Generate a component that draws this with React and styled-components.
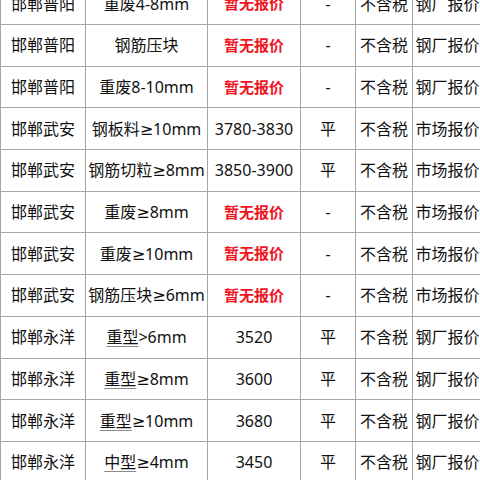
import React from 'react';
import styled, { createGlobalStyle } from 'styled-components';

const rows = [
  { area: '邯郸普阳', spec: '重废4-8mm', price: null, change: '-', tax: '不含税', source: '钢厂报价' },
  { area: '邯郸普阳', spec: '钢筋压块', price: null, change: '-', tax: '不含税', source: '钢厂报价' },
  { area: '邯郸普阳', spec: '重废8-10mm', price: null, change: '-', tax: '不含税', source: '钢厂报价' },
  { area: '邯郸武安', spec: '钢板料≥10mm', price: '3780-3830', change: '平', tax: '不含税', source: '市场报价' },
  { area: '邯郸武安', spec: '钢筋切粒≥8mm', price: '3850-3900', change: '平', tax: '不含税', source: '市场报价' },
  { area: '邯郸武安', spec: '重废≥8mm', price: null, change: '-', tax: '不含税', source: '市场报价' },
  { area: '邯郸武安', spec: '重废≥10mm', price: null, change: '-', tax: '不含税', source: '市场报价' },
  { area: '邯郸武安', spec: '钢筋压块≥6mm', price: null, change: '-', tax: '不含税', source: '市场报价' },
  { area: '邯郸永洋', type: '重型', spec: '>6mm', price: '3520', change: '平', tax: '不含税', source: '钢厂报价' },
  { area: '邯郸永洋', type: '重型', spec: '≥8mm', price: '3600', change: '平', tax: '不含税', source: '钢厂报价' },
  { area: '邯郸永洋', type: '重型', spec: '≥10mm', price: '3680', change: '平', tax: '不含税', source: '钢厂报价' },
  { area: '邯郸永洋', type: '中型', spec: '≥4mm', price: '3450', change: '平', tax: '不含税', source: '钢厂报价' },
];

const GlobalStyle = createGlobalStyle`
  html, body {
    margin: 0;
    padding: 0;
    background: #ffffff;
    overflow: hidden;
  }
  body {
    font-family: "Noto Sans", "DejaVu Sans", "Noto Sans CJK SC", sans-serif;
  }
`;

const PriceTable = styled.div`
  display: grid;
  grid-template-columns: 85px 122px 93px 55px 57px 70px;
  grid-auto-rows: 41.7px;
  width: max-content;
  margin-top: -16.7px;
  border-left: 1px solid #a6a6a6;
  color: #111111;
  font-size: 16px;
`;

const Cell = styled.div`
  display: flex;
  align-items: center;
  justify-content: center;
  white-space: nowrap;
  border-right: 1px solid #a6a6a6;
  border-bottom: 1px solid #a6a6a6;
  line-height: 1;
`;

const NoPrice = styled.span`
  color: #f0141e;
  font-weight: 700;
  font-size: 15px;
`;

const TypeLink = styled.span`
  text-decoration: underline;
  text-decoration-color: #8a8a8a;
  text-underline-offset: 3px;
`;

export default function App() {
  return (
    <>
      <GlobalStyle />
      <PriceTable>
        {rows.map((r, i) => (
          <React.Fragment key={i}>
            <Cell>{r.area}</Cell>
            <Cell>
              {r.type && <TypeLink>{r.type}</TypeLink>}
              {r.spec}
            </Cell>
            <Cell>{r.price ? r.price : <NoPrice>暂无报价</NoPrice>}</Cell>
            <Cell>{r.change}</Cell>
            <Cell>{r.tax}</Cell>
            <Cell>{r.source}</Cell>
          </React.Fragment>
        ))}
      </PriceTable>
    </>
  );
}
